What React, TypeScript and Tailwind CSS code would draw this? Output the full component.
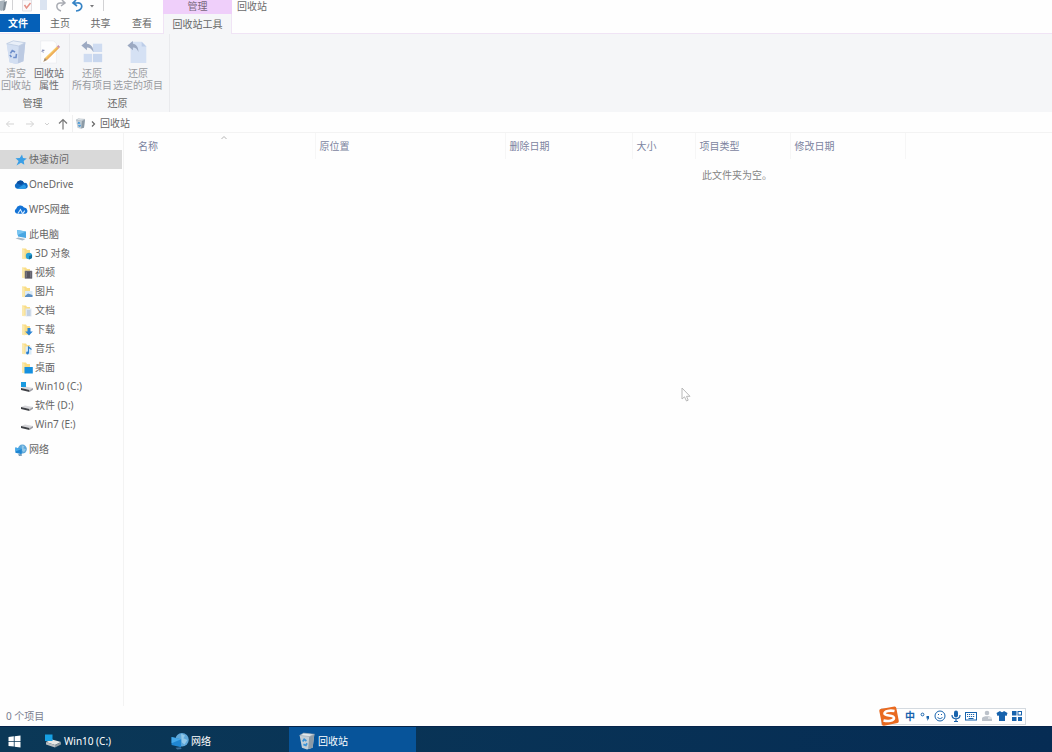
import React from 'react';

type IconProps = { className?: string };

function BinIcon({ className }: IconProps) {
  return (
    <svg viewBox="0 0 24 28" className={className}>
      <path d="M2 5 L9 2 L22 4 L20 24 L12 27 L5 25 Z" fill="#ccd9ee" />
      <path d="M2 5 L15 7.500 L14 26.500 L12 27 L5 25 Z" fill="#d3dff2" />
      <path d="M15 7.500 L22 4 L20 24 L14 26.500 Z" fill="#bccae2" />
      <path d="M2 5 L9 2 L22 4 L15 7.500 Z" fill="#e9eff8" stroke="#bccae0" strokeWidth="0.800" />
      <path
        d="M6 15.500 L8 12.500 L11 14 M12.500 16 L12 20 L9 20 M7 19.500 L5.500 17"
        fill="none"
        stroke="#6f8fcb"
        strokeWidth="1.700"
      />
    </svg>
  );
}

function SmallBinIcon({ className }: IconProps) {
  return (
    <svg viewBox="0 0 16 16" className={className}>
      <path d="M1.500 3 L5 1 L14.500 2 L13 14 L8 15.500 L3.500 14 Z" fill="#c3ced6" />
      <path d="M10 4 L14.500 2 L13 14 L9 15.200 Z" fill="#8d9ba6" />
      <path d="M1.500 3 L5 1 L14.500 2 L10 4 Z" fill="#e3e9ed" stroke="#9aa7b1" strokeWidth="0.600" />
      <path d="M4.200 8.500 L5.500 6.500 L7.500 8 M8 10 L7 12 L4.800 11" fill="none" stroke="#3a93d8" strokeWidth="1.500" />
    </svg>
  );
}

function PropertiesIcon({ className }: IconProps) {
  return (
    <svg viewBox="0 0 24 28" className={className}>
      <path d="M3 2 H17 L20 5 V26 H3 Z" fill="#fdfdfe" stroke="#e9ebef" strokeWidth="0.800" />
      <path d="M4 13.500 l3 -1.500 M5 11.500 l1 3" stroke="#8790b8" strokeWidth="1.300" />
      <path d="M6 24.500 L7.500 20.500 L20.500 8 L22.500 10 L9.800 22.500 Z" fill="#f5c964" />
      <path d="M9.800 22.500 L22.500 10 L21.500 9 L8.700 21.500 Z" fill="#eda95c" />
      <path d="M20.500 8 L22 6.500 L24 8.500 L22.500 10 Z" fill="#cd93a6" />
      <path d="M6 24.500 L7.500 20.500 L9.800 22.500 Z" fill="#a08b7c" />
    </svg>
  );
}

function RestoreAllIcon({ className }: IconProps) {
  return (
    <svg viewBox="0 0 24 26" className={className}>
      <rect x="13" y="4" width="10" height="9" fill="#cfdcf1" />
      <rect x="3" y="15" width="9" height="9" fill="#cfdcf1" />
      <rect x="13" y="15" width="10" height="9" fill="#c7d6ee" />
      <path d="M0.500 6 L6.500 1 V4 C11 4.500 13.500 7.500 13.500 13 C11.500 9.500 9.500 8.300 6.500 8.200 V11 Z" fill="#9ca9c2" />
    </svg>
  );
}

function RestoreSelectedIcon({ className }: IconProps) {
  return (
    <svg viewBox="0 0 24 26" className={className}>
      <path d="M4 2 H16 L21 7 V25 H4 Z" fill="#d5e1f4" />
      <path d="M16 2 V7 H21 Z" fill="#bccde8" />
      <path d="M0.500 6 L6.500 1 V4 C10 4.500 12.500 7.500 12.500 13 C11 9.500 9.500 8.300 6.500 8.200 V11 Z" fill="#9ca9c2" />
    </svg>
  );
}

function StarIcon({ className }: IconProps) {
  return (
    <svg viewBox="0 0 12 12" className={className}>
      <path d="M7 0.500 L8 4 L11.800 4.600 L8.700 6.900 L9.300 10.800 L6 8.800 L1.500 11.500 L3.600 7.100 L0.500 4.300 L4.800 4 Z" fill="#3a9fe6" />
    </svg>
  );
}

function OneDriveIcon({ className }: IconProps) {
  return (
    <svg viewBox="0 0 13 10" className={className}>
      <path d="M3 9 A2.800 2.800 0 0 1 2.300 3.800 A3.800 3.800 0 0 1 9.300 3.500 A2.800 2.800 0 0 1 10.500 9 Z" fill="#0f6cc4" />
      <path d="M2.300 3.800 A3.800 3.800 0 0 1 9.300 3.500 L6.500 5.500 Z" fill="#0a4f9f" />
      <path d="M3 9 L9.300 5 A2.500 2.500 0 0 1 10.500 9 Z" fill="#2a9be8" />
    </svg>
  );
}

function WpsIcon({ className }: IconProps) {
  return (
    <svg viewBox="0 0 13 10" className={className}>
      <path d="M3 9 A2.600 2.600 0 0 1 2 4.200 A4 4 0 0 1 9.300 3.200 A3 3 0 0 1 10.500 9 Z" fill="#1473d6" />
      <path d="M3.500 9 L6 5 L8 9 L10 6" fill="none" stroke="#d5ebff" strokeWidth="1" />
    </svg>
  );
}

function ComputerIcon({ className }: IconProps) {
  return (
    <svg viewBox="0 0 13 12" className={className}>
      <path d="M2.500 1 L11.500 2.500 V9 L3.500 7.500 Z" fill="#4aa7e2" />
      <path d="M2.500 1 L11.500 2.500 L3 6 Z" fill="#79c5f1" />
      <path d="M1 9.500 L4 8.500 L11 10 L8 11.500 Z" fill="#a9b9c6" />
    </svg>
  );
}

function FolderIcon({ className, children }: IconProps & { children?: React.ReactNode }) {
  return (
    <svg viewBox="0 0 12 12" className={className}>
      <path d="M1 0.500 H5 L6 2 H9 V11 L1 10.500 Z" fill="#f9dd86" />
      <path d="M1 0.500 L3.500 2 V11.500 L1 10.500 Z" fill="#fbe9ae" />
      {children}
    </svg>
  );
}

function DriveIcon({ className, system }: IconProps & { system?: boolean }) {
  return (
    <svg viewBox="0 0 14 12" className={className}>
      <path d="M1 7 L5 5.500 L13 7 L9.500 9 Z" fill="#d6d6da" />
      <path d="M1 7 L9.500 9 V11 L1 9 Z" fill="#3e4045" />
      <path d="M9.500 9 L13 7 V8.800 L9.500 11 Z" fill="#9b9ba2" />
      {system && <path d="M1 1 H6 V6 H1 Z" fill="#1b9be0" />}
    </svg>
  );
}

function NetworkIcon({ className }: IconProps) {
  return (
    <svg viewBox="0 0 16 16" className={className}>
      <circle cx="9.800" cy="6.800" r="6" fill="#5fa8da" />
      <path d="M9 1.500 L12.500 3 L11 5.500 L14.500 7 L12 11 L9.500 9 Z" fill="#93c8e8" />
      <path d="M0.500 4.500 L9 6.500 V13.500 L0.500 11.500 Z" fill="#1f86d2" />
      <path d="M0.500 4.500 L9 6.500 L0.500 10 Z" fill="#46a9ea" />
      <path d="M4 14 L8.500 13.500 L9.500 15.200 L5.500 15.500 Z" fill="#3d6f98" />
    </svg>
  );
}

function SystemDriveIcon({ className }: IconProps) {
  return (
    <svg viewBox="0 0 18 14" className={className}>
      <path d="M2 8 L8 5.500 L17 8 L11 11 Z" fill="#e8e8e4" />
      <path d="M2 8 L11 11 V13.500 L2 10.500 Z" fill="#b9bdbf" />
      <path d="M11 11 L17 8 V10.500 L11 13.500 Z" fill="#8e989e" />
      <path d="M1 0.500 H8.500 V7 H1 Z" fill="#16a0e4" />
    </svg>
  );
}

const folders = [
  { name: '3D 对象', mark: <><circle cx="8" cy="8" r="3.200" fill="#2aa3d8" /><path d="M8 8 L11 7 V10 L8 11.500 Z" fill="#12709f" /></> },
  { name: '视频', mark: <path d="M4 4 H11 V11.500 H4 Z M5.500 5 V10.500 M9.500 5 V10.500" fill="#56545f" stroke="#8c8a96" strokeWidth="0.600" /> },
  { name: '图片', mark: <><rect x="4" y="5" width="7.500" height="6" fill="#dbeaf6" /><path d="M4 10 L7 7.500 L11.500 9 V11 H4 Z" fill="#5a8ec4" /></> },
  { name: '文档', mark: <><rect x="4.500" y="3.500" width="6" height="8" fill="#dde6f1" /><path d="M6 6 H9.500 M6 8 H9.500 M6 10 H9.500" stroke="#8ea7c7" strokeWidth="0.700" /></> },
  { name: '下载', mark: <path d="M6.500 4 H9.500 V7.500 H11.800 L8 11.500 L4.200 7.500 H6.500 Z" fill="#2b84d3" /> },
  { name: '音乐', mark: <><rect x="4.500" y="3.500" width="6" height="8" fill="#d9ebf8" /><path d="M7.500 10 V4 L10.500 6.500" fill="none" stroke="#2c7fcb" strokeWidth="1.100" /><circle cx="6.500" cy="10" r="1.400" fill="#2c7fcb" /></> },
  { name: '桌面', mark: <rect x="3.500" y="5" width="8.300" height="6.500" fill="#1590e0" /> },
];

const drives = [
  { name: 'Win10 (C:)', system: true },
  { name: '软件 (D:)', system: false },
  { name: 'Win7 (E:)', system: false },
];

const tasks = [
  { name: 'Win10 (C:)', icon: <SystemDriveIcon className="h-4 w-[18px]" />, active: false },
  { name: '网络', icon: <NetworkIcon className="size-[18px]" />, active: false },
  { name: '回收站', icon: <SmallBinIcon className="size-[18px]" />, active: true },
];

function NavItem({ icon, label, active }: { icon: React.ReactNode; label: string; active?: boolean }) {
  return (
    <a
      href="#"
      className={`flex h-[19px] items-center gap-px pl-[14px] ${active ? 'mr-px bg-[#d9d9d9]' : ''}`}
    >
      {icon}
      <span>{label}</span>
    </a>
  );
}

function RibbonButton({ icon, lines, muted }: { icon: React.ReactNode; lines: string[]; muted?: boolean }) {
  return (
    <button
      type="button"
      className={`flex flex-col items-center leading-3 whitespace-nowrap ${muted ? 'text-[#999ba0]' : 'text-[#6c6c70]'}`}
    >
      <span className="mb-px flex h-7 items-center">{icon}</span>
      {lines.map((line) => (
        <span key={line}>{line}</span>
      ))}
    </button>
  );
}

function TitleBar() {
  return (
    <header className="flex h-[14px] overflow-hidden">
      <div className="flex w-[163px] items-start">
        <svg viewBox="0 0 110 12" className="h-3 w-[110px]">
          <path d="M0 1 L5 0 L4 10 L1 11 L0 10 Z" fill="#a9b4bd" />
          <path d="M4 2 L7 1 L5 10 L3 11 Z" fill="#808b95" />
          <path d="M12.500 0 V10 M103.500 0 V11" stroke="#d2d2d4" />
          <path d="M22.500 0 H31.500 V11 H22.500 Z" fill="#fbf9fa" stroke="#e2dfe3" />
          <path d="M24.500 5 L26.500 8 L30.500 3" fill="none" stroke="#e59086" strokeWidth="1.500" />
          <path d="M40 0 H47 V10 H40 Z" fill="#dbe4f1" />
          <path d="M61 11 C55 9 56 2 61 3 H64.500 M62 0 L65 3 L61 6" fill="none" stroke="#a9acb3" strokeWidth="1.500" />
          <path d="M76 11 C84 10 83 2 77 3 H73.500 M76 0 L73 3 L77 6" fill="none" stroke="#3583c5" strokeWidth="1.700" />
          <path d="M90 5 H94 L92 7.500 Z" fill="#77777a" />
        </svg>
      </div>
      <div className="w-[69px] bg-[#efcffa] text-center leading-3 text-[#77677d]">管理</div>
      <h1 className="pl-[5px] leading-3 text-[#6c6c6c]">回收站</h1>
    </header>
  );
}

function Ribbon() {
  return (
    <>
      <div className="flex h-5 border-b border-[#f0e4f5]">
        <button type="button" className="h-[18px] w-10 bg-[#0560b8] pr-1 font-bold text-white">文件</button>
        <button type="button" className="w-10">主页</button>
        <button type="button" className="w-[41px]">共享</button>
        <button type="button" className="w-[42px]">查看</button>
        <button type="button" className="-mb-px w-[69px] border-x border-[#f0e4f5] bg-[#f5f6f8]">回收站工具</button>
      </div>
      <div className="flex h-[78px] bg-[#f5f6f8]">
        <section className="flex w-[70px] flex-col justify-between border-r border-[#e9eaed] pt-1 pb-px">
          <div className="flex gap-[3px] pl-px">
            <RibbonButton icon={<BinIcon className="h-[26px] w-6" />} lines={['清空', '回收站']} muted />
            <RibbonButton icon={<PropertiesIcon className="h-[26px] w-6" />} lines={['回收站', '属性']} />
          </div>
          <h2 className="pr-1 text-center">管理</h2>
        </section>
        <section className="flex w-[100px] flex-col justify-between border-r border-[#e9eaed] pt-1 pb-px">
          <div className="flex gap-px pl-[2px]">
            <RibbonButton icon={<RestoreAllIcon className="h-6 w-6" />} lines={['还原', '所有项目']} muted />
            <RibbonButton icon={<RestoreSelectedIcon className="h-6 w-6" />} lines={['还原', '选定的项目']} muted />
          </div>
          <h2 className="pr-1 text-center">还原</h2>
        </section>
      </div>
    </>
  );
}

function AddressBar() {
  return (
    <div className="flex h-[21px] items-center border-b border-[#f3f3f3] pt-[3px]">
      <div className="flex w-[72px] items-center">
        <button type="button" aria-label="后退" className="pl-[5px]">
          <svg viewBox="0 0 10 10" className="size-[10px]">
            <path d="M9 5 H1.500 M4.500 2 L1.500 5 L4.500 8" fill="none" stroke="#d3d3d3" />
          </svg>
        </button>
        <button type="button" aria-label="前进" className="pl-[10px]">
          <svg viewBox="0 0 10 10" className="size-[10px]">
            <path d="M1 5 H8.500 M5.500 2 L8.500 5 L5.500 8" fill="none" stroke="#d3d3d3" />
          </svg>
        </button>
        <button type="button" aria-label="最近位置" className="pl-2">
          <svg viewBox="0 0 8 8" className="size-2">
            <path d="M2 3 L4 5 L6 3" fill="none" stroke="#d0d0d0" />
          </svg>
        </button>
        <button type="button" aria-label="向上" className="pl-[6px]">
          <svg viewBox="0 0 12 12" className="size-3">
            <path d="M6 11.500 V1.500 M2 5.500 L6 1.500 L10 5.500" fill="none" stroke="#777" strokeWidth="1.200" />
          </svg>
        </button>
      </div>
      <div className="flex h-full flex-1 items-center border-l border-[#f0f0f0] pl-[2px]">
        <SmallBinIcon className="size-[11px]" />
        <svg viewBox="0 0 6 8" className="ml-1 h-2 w-[6px]">
          <path d="M2 1.500 L4.500 4 L2 6.500" fill="none" stroke="#666" strokeWidth="1.200" />
        </svg>
        <a href="#" className="pl-1">回收站</a>
      </div>
    </div>
  );
}

function Sidebar() {
  return (
    <nav className="w-[124px] shrink-0 border-r border-[#f3f3f3] pt-[17px]">
      <div className="flex flex-col gap-[6px]">
        <NavItem icon={<StarIcon className="mx-px size-3" />} label="快速访问" active />
        <NavItem icon={<OneDriveIcon className="h-[11px] w-[14px]" />} label="OneDrive" />
        <NavItem icon={<WpsIcon className="h-[11px] w-[14px]" />} label="WPS网盘" />
        <div>
          <NavItem icon={<ComputerIcon className="h-3 w-[14px]" />} label="此电脑" />
          <div className="pl-[6px]">
            {folders.map((folder) => (
              <NavItem
                key={folder.name}
                icon={<FolderIcon className="mx-px size-3">{folder.mark}</FolderIcon>}
                label={folder.name}
              />
            ))}
            {drives.map((drive) => (
              <NavItem
                key={drive.name}
                icon={<DriveIcon className="h-3 w-[14px]" system={drive.system} />}
                label={drive.name}
              />
            ))}
          </div>
        </div>
        <NavItem icon={<NetworkIcon className="mx-px size-3" />} label="网络" />
      </div>
    </nav>
  );
}

function FileList() {
  return (
    <main className="min-w-0 flex-1">
      <table className="w-[781px] table-fixed text-left">
        <thead className="text-[#7c84a0]">
          <tr className="h-[26px]">
            <th className="relative w-[191px] border-r border-[#f6f6f6] pl-[14px] font-normal">
              名称
              <svg viewBox="0 0 8 5" className="absolute top-[2px] left-24 h-[5px] w-2">
                <path d="M1.500 4 L4 1.500 L6.500 4" fill="none" stroke="#b5b5b5" />
              </svg>
            </th>
            <th className="w-[190px] border-r border-[#f6f6f6] pl-1 font-normal">原位置</th>
            <th className="w-[127px] border-r border-[#f6f6f6] pl-1 font-normal">删除日期</th>
            <th className="w-[63px] border-r border-[#f6f6f6] pl-1 font-normal">大小</th>
            <th className="w-[95px] border-r border-[#f6f6f6] pl-1 font-normal">项目类型</th>
            <th className="w-[115px] border-r border-[#f6f6f6] pl-1 font-normal">修改日期</th>
          </tr>
        </thead>
        <tbody>
          <tr className="h-8 text-[#858585]">
            <td colSpan={4} />
            <td colSpan={2} className="pl-[7px]">此文件夹为空。</td>
          </tr>
        </tbody>
      </table>
    </main>
  );
}

function ImeBar() {
  return (
    <div className="flex h-[17px] items-center border border-[#d4dae0] bg-white text-[#1763ad]">
      <svg viewBox="0 0 22 22" className="-ml-1 size-[22px] shrink-0">
        <path d="M2.500 4 L16.500 1.500 Q18 1.300 18.300 3 L20.800 16 Q21 17.500 19.500 18 L6 20.800 Q4.300 21 4 19.500 L1.300 6 Q1 4.300 2.500 4 Z" fill="#e96a20" />
        <path
          d="M16.500 6 C12 5 6.500 6 6.500 8.500 C6.500 11.500 16 9.500 16 13 C16 16 9.500 16.500 5.500 15.500"
          fill="none"
          stroke="#fff"
          strokeWidth="2.600"
        />
      </svg>
      <button type="button" className="w-5 text-center font-bold">中</button>
      <svg viewBox="0 0 10 12" className="mr-1 h-3 w-[10px]">
        <circle cx="2.500" cy="4.500" r="1.400" fill="none" stroke="currentColor" />
        <path d="M6.500 6 H9 V8.500 L7 11 L7.500 8.500 H6.500 Z" fill="currentColor" />
      </svg>
      <svg viewBox="0 0 12 12" className="mr-1 size-3" fill="none" stroke="currentColor">
        <circle cx="6" cy="6" r="5" />
        <path d="M3.500 7 C4.500 9.200 7.500 9.200 8.500 7 M4 4.500 H5 M7 4.500 H8" />
      </svg>
      <svg viewBox="0 0 12 12" className="mr-[3px] size-3">
        <rect x="4" y="0.500" width="4" height="7" rx="2" fill="currentColor" />
        <path d="M2 5 C2 10 10 10 10 5 M6 9 V11.500 M4 11.500 H8" fill="none" stroke="currentColor" strokeWidth="1.200" />
      </svg>
      <svg viewBox="0 0 12 12" className="mr-1 size-3" fill="none" stroke="currentColor">
        <rect x="0.500" y="2.500" width="11" height="7.500" />
        <path d="M2 4.500 H10 M2 6.500 H10" strokeDasharray="1.200 0.800" />
        <path d="M3.500 8.500 H8.500" />
      </svg>
      <svg viewBox="0 0 12 12" className="mr-[3px] size-3" fill="#bcc2ca">
        <circle cx="6" cy="3" r="2.300" />
        <path d="M1 8 C2 5.500 10 5.500 11 8 V11 H1 Z" />
        <path d="M7 8 H11" stroke="#fff" />
      </svg>
      <svg viewBox="0 0 12 12" className="mr-[3px] size-3" fill="currentColor">
        <path d="M4 1 C5 2.500 7 2.500 8 1 L11.500 3 L10.500 6 L9 5.500 V11 H3 V5.500 L1.500 6 L0.500 3 Z" />
      </svg>
      <svg viewBox="0 0 12 12" className="mr-[2px] size-3" fill="currentColor">
        <rect x="1" y="1" width="4.500" height="4.500" />
        <rect x="1" y="7" width="4.500" height="4" />
        <rect x="7" y="7" width="4" height="4" />
        <rect x="7" y="1.500" width="3.500" height="3.500" fill="none" stroke="currentColor" />
      </svg>
    </div>
  );
}

function Taskbar() {
  return (
    <footer className="flex h-[26px] border-t border-[#06244a] bg-linear-to-r from-[#0b3857] to-[#062c54] text-white">
      <button type="button" aria-label="开始" className="flex w-[35px] items-center pt-[3px] pl-2">
        <svg viewBox="0 0 13 13" className="size-[13px]" fill="#fff">
          <path d="M0.500 2 L5.800 1.300 V6 H0.500 Z M6.600 1.200 L12.500 0.400 V6 H6.600 Z M0.500 6.800 H5.800 V11.600 L0.500 10.900 Z M6.600 6.800 H12.500 V12.500 L6.600 11.700 Z" />
        </svg>
      </button>
      {tasks.map((task) => (
        <button
          key={task.name}
          type="button"
          className={`flex w-[127px] items-center gap-[2px] pt-[3px] pl-[9px] ${task.active ? 'bg-[#07549a]' : ''}`}
        >
          {task.icon}
          {task.name}
        </button>
      ))}
    </footer>
  );
}

export default function App() {
  return (
    <div className="relative flex min-h-screen flex-col overflow-hidden bg-[#fefefe] font-['Noto_Sans','Noto_Sans_CJK_SC',sans-serif] text-[10px] text-[#666]">
      <TitleBar />
      <Ribbon />
      <AddressBar />
      <div className="flex flex-1">
        <Sidebar />
        <FileList />
      </div>
      <div className="flex h-5 items-center justify-between pr-[26px] pl-[6px]">
        <span className="text-[#7a7f90]">0 个项目</span>
        <ImeBar />
      </div>
      <Taskbar />
      <svg viewBox="0 0 10 15" className="pointer-events-none absolute top-[387px] left-[681px] h-[15px] w-[10px]">
        <path d="M1 1 V12 L3.500 9.800 L5.500 14 L7.200 13.200 L5.500 9.300 H9 Z" fill="#fff" stroke="#b8b8b8" />
      </svg>
    </div>
  );
}
